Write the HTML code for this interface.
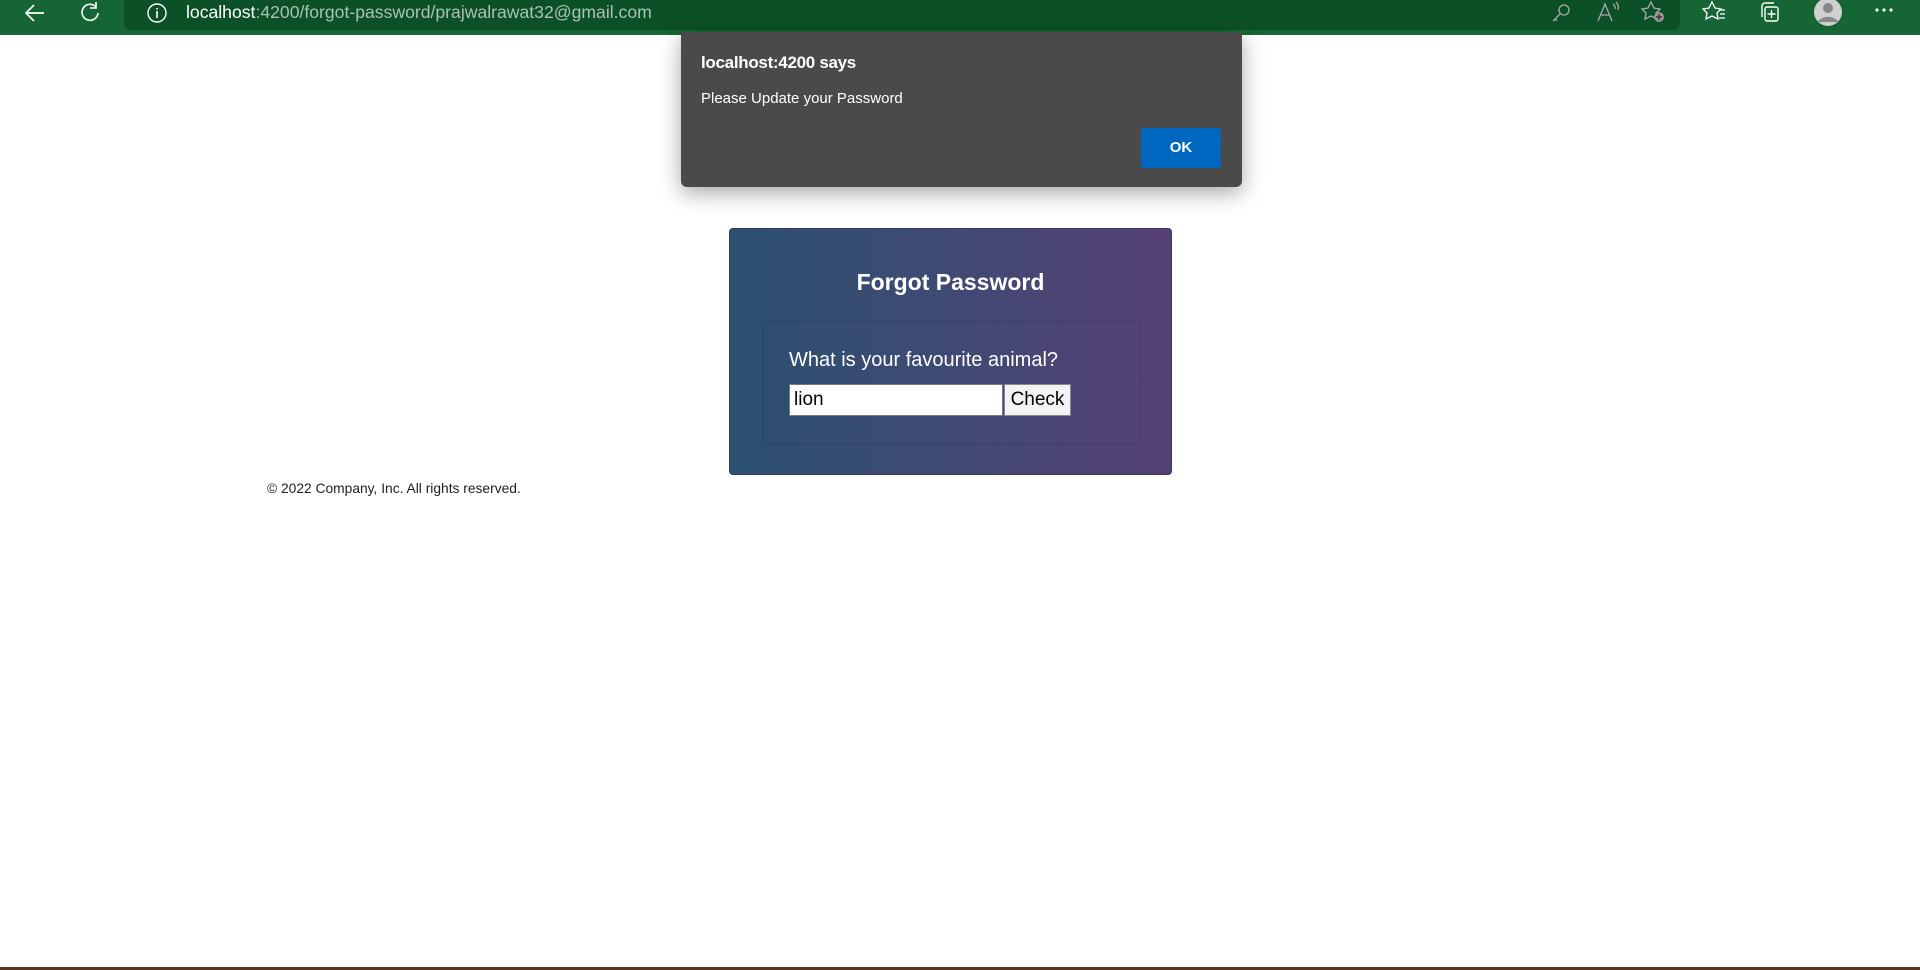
<!DOCTYPE html>
<html><head><meta charset="utf-8"><style>
*{margin:0;padding:0;box-sizing:border-box}
html,body{width:1920px;height:970px;overflow:hidden;background:#fff;font-family:"Liberation Sans",sans-serif;position:relative}
.top{position:absolute;left:0;top:0;width:1920px;height:35px;background:#156634}
.addr{position:absolute;left:124px;top:0;width:1556px;height:30px;background:#0c5028;border-radius:0 0 6px 6px}
.url{position:absolute;left:186px;top:1px;font-size:17.6px;color:#a9c3b1;line-height:22px}
.url b{font-weight:normal;color:#fff}
.dlg{position:absolute;left:681px;top:32px;width:561px;height:155px;background:#4a4a4a;border-radius:0 0 6px 6px;box-shadow:0 6px 22px rgba(0,0,0,.35);color:#fff}
.dlg h1{position:absolute;left:20px;top:21px;font-size:17px;font-weight:bold;letter-spacing:-0.3px}
.dlg p{position:absolute;left:20px;top:58px;font-size:15px}
.ok{position:absolute;left:460px;top:96px;width:80px;height:40px;background:#0067c0;border-radius:3px;font-size:15px;font-weight:bold;text-align:center;line-height:40px}
.card{position:absolute;left:729px;top:228px;width:443px;height:247px;border-radius:4px;background:linear-gradient(90deg,#2b5070,#3c4b73 40%,#554075);border:1px solid #3a3a5a}
.card h2{position:absolute;left:0;width:100%;top:40px;text-align:center;color:#fff;font-size:23px;font-weight:bold}
.inner{position:absolute;left:32px;top:92px;width:379px;height:123px;border:1px solid rgba(40,40,80,.3);border-radius:3px}
.q{position:absolute;left:26px;top:27px;color:#fff;font-size:20px}
.inp{position:absolute;left:26px;top:62px;width:214px;height:32px;background:#fff;border:1px solid #777;font-size:19px;line-height:30px;padding-left:4px;color:#000}
.btn{position:absolute;left:241px;top:62px;width:67px;height:32px;background:#f3f3f3;border:1px solid #888;font-size:19px;line-height:30px;text-align:center;color:#000}
.foot{position:absolute;left:267px;top:481px;font-size:13.8px;color:#222}
.bot{position:absolute;left:0;top:967px;width:1920px;height:3px;background:#5a3522}
svg{position:absolute}
</style></head><body>
<div class="top"></div>
<div class="addr"></div>
<svg style="left:22px;top:2px" width="26" height="22" viewBox="0 0 26 22"><path d="M22 11H5M12 3L4 11l8 8" stroke="#fff" stroke-width="1.7" fill="none"/></svg>
<svg style="left:78px;top:1px" width="24" height="24" viewBox="0 0 24 24"><path d="M18 6A8 8 0 1 0 20 12M18 1v6h-6" stroke="#fff" stroke-width="1.6" fill="none"/></svg>
<svg style="left:146px;top:2px" width="22" height="22" viewBox="0 0 22 22"><circle cx="11" cy="11" r="9" stroke="#fff" stroke-width="1.4" fill="none"/><path d="M11 9v7M11 6v1.5" stroke="#fff" stroke-width="1.6"/></svg>
<div class="url"><b>localhost</b>:4200/forgot-password/prajwalrawat32@gmail.com</div>
<svg style="left:1550px;top:2px" width="22" height="22" viewBox="0 0 22 22"><circle cx="14" cy="8" r="5" stroke="#aaa" stroke-width="1.3" fill="none"/><path d="M10 12L3 19M5 17l2 2" stroke="#aaa" stroke-width="1.3" fill="none"/></svg>
<svg style="left:1596px;top:1px" width="26" height="24" viewBox="0 0 26 24"><path d="M2 20L9 3l7 17M5 14h8M17 3a5 5 0 0 1 2 5M20 1a8 8 0 0 1 2 8" stroke="#aaa" stroke-width="1.3" fill="none"/></svg>
<svg style="left:1640px;top:0px" width="28" height="26" viewBox="0 0 28 26"><path d="M11 2l3 6 6 1-4 4 1 6-6-3-6 3 1-6-4-4 6-1z" stroke="#aaa" stroke-width="1.3" fill="none"/><circle cx="19" cy="17" r="5" fill="#999"/><path d="M19 14v6M16 17h6" stroke="#333" stroke-width="1.4"/></svg>
<svg style="left:1702px;top:0px" width="26" height="24" viewBox="0 0 26 24"><path d="M10 2l3 6 6 1-4 4 1 6-6-3-6 3 1-6-4-4 6-1z" stroke="#fff" stroke-width="1.3" fill="none"/><path d="M17 10h6M18 14h5M17 18h6" stroke="#fff" stroke-width="1.3"/></svg>
<svg style="left:1758px;top:1px" width="24" height="24" viewBox="0 0 24 24"><rect x="7" y="6" width="13" height="14" rx="2" stroke="#fff" stroke-width="1.4" fill="none"/><path d="M4 16V5a3 3 0 0 1 3-3h9M13.5 9v8M9.5 13h8" stroke="#fff" stroke-width="1.4" fill="none"/></svg>
<svg style="left:1814px;top:0" width="28" height="26" viewBox="0 0 28 26"><circle cx="14" cy="12" r="14" fill="#d0d0d0"/><circle cx="14" cy="8" r="5" fill="#888"/><path d="M4 22a11 9 0 0 1 20 0z" fill="#888"/></svg>
<svg style="left:1874px;top:6px" width="20" height="8"><circle cx="3" cy="4" r="1.6" fill="#fff"/><circle cx="10" cy="4" r="1.6" fill="#fff"/><circle cx="17" cy="4" r="1.6" fill="#fff"/></svg>
<div class="card"><h2>Forgot Password</h2>
<div class="inner"><div class="q">What is your favourite animal?</div><div class="inp">lion</div><div class="btn">Check</div></div></div>
<div class="foot">© 2022 Company, Inc. All rights reserved.</div>
<div class="dlg"><h1>localhost:4200 says</h1><p>Please Update your Password</p><div class="ok">OK</div></div>
<div class="bot"></div>
</body></html>
